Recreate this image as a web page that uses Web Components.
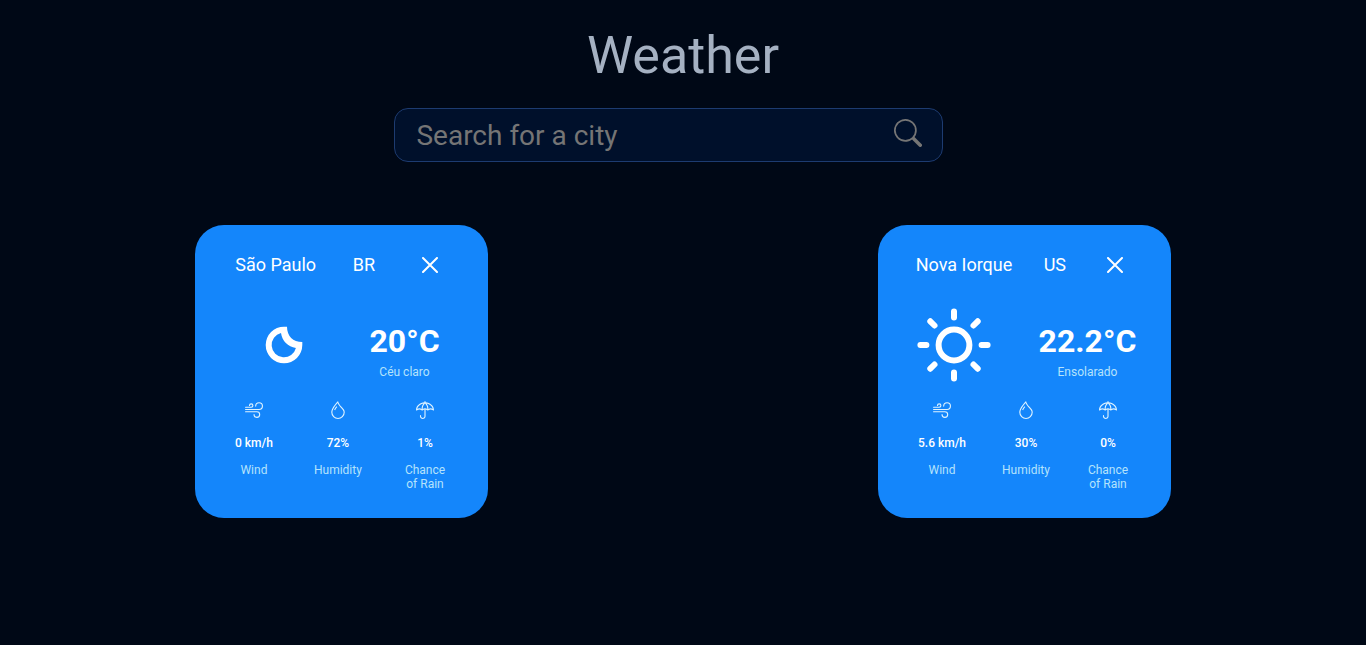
<!DOCTYPE html>
<html lang="en">
<head>
<meta charset="utf-8">
<meta name="viewport" content="width=device-width, initial-scale=1">
<title>Weather</title>
<style>
  body { margin: 0; min-height: 100vh; background: #000816; color: #fff; font-family: Roboto, sans-serif; }
</style>
</head>
<body>
<weather-app>
  <city-search slot="search"></city-search>
  <weather-card city="São Paulo" country="BR" sky="moon" temp="20" wind="0" humidity="72" rain="1">Céu claro</weather-card>
  <weather-card city="Nova Iorque" country="US" sky="sun" temp="22.2" wind="5.6" humidity="30" rain="0">Ensolarado</weather-card>
</weather-app>

<template id="app-template">
  <style>
    :host { display: block; }
    header { display: flex; flex-direction: column; align-items: center; gap: 22px; padding-top: 26px; }
    h1 { margin: 0; font-size: 52px; line-height: 60px; font-weight: 400; color: #a5b1c2; }
    ::slotted(city-search) { width: 100%; }
    main { display: grid; grid-template-columns: repeat(auto-fit, minmax(300px, 1fr)); justify-items: center; gap: 24px 0; padding: 63px 0 48px; }
  </style>
  <header><h1>Weather</h1><slot name="search"></slot></header>
  <main><slot></slot></main>
</template>

<template id="search-template">
  <style>
    :host { display: block; }
    form { display: flex; justify-content: center; padding-right: 29px; }
    .field { position: relative; width: 41%; min-width: 280px; }
    input { box-sizing: border-box; width: 100%; height: 54px; padding: 0 64px 0 21px; border: 1px solid #1d3b70; border-radius: 14px;
      background: #00102b; color: #a5b1c2; font: 400 28px/34px Roboto, sans-serif; outline: none; }
    input::placeholder { color: #757575; opacity: 1; }
    button { position: absolute; top: 11px; right: 21px; padding: 0; border: 0; background: none; color: #757575; cursor: pointer; }
    svg { display: block; width: 28px; height: 28px; fill: currentColor; }
  </style>
  <form>
    <div class="field">
      <input type="text" name="city" placeholder="Search for a city" aria-label="Search for a city">
      <button type="submit" aria-label="Search">
        <svg viewBox="0 0 16 16" aria-hidden="true"><path d="M11.742 10.344a6.5 6.5 0 1 0-1.397 1.398h-.001c.03.04.062.078.098.115l3.85 3.85a1 1 0 0 0 1.415-1.414l-3.85-3.85a1.007 1.007 0 0 0-.115-.1zM12 6.5a5.5 5.5 0 1 1-11 0 5.5 5.5 0 0 1 11 0z"/></svg>
      </button>
    </div>
  </form>
</template>

<template id="card-template">
  <style>
    :host { display: block; box-sizing: border-box; width: 293px; min-height: 293px; padding: 24px 22px; border-radius: 29px; background: #1486fb; }
    header { display: flex; align-items: center; justify-content: space-around; height: 32px; font-size: 18px; line-height: 22px; }
    h2 { margin: 0; font-size: 18px; line-height: 22px; font-weight: 400; }
    button { padding: 8px 10px; border: 0; background: none; color: inherit; cursor: pointer; }
    button svg { display: block; width: 16px; height: 16px; stroke: currentColor; stroke-width: 2; stroke-linecap: round; }
    .now { display: flex; align-items: center; justify-content: center; gap: 44px; height: 80px; margin-top: 24px; }
    .reading { padding-top: 10px; text-align: center; }
    .reading p { margin: 0; }
    .reading .temp { font-size: 32px; line-height: 40px; font-weight: 700; }
    .reading .desc { font-size: 12px; line-height: 14px; margin-top: 4px; color: #b5e3fb; }
    .stats { display: flex; justify-content: space-between; margin-top: 16px; padding: 0 19px 0 18px; }
  </style>
  <header>
    <h2 class="city"></h2><span class="country"></span>
    <button type="button" aria-label="Remove"><svg viewBox="0 0 16 16" aria-hidden="true"><path d="M1 1 15 15M15 1 1 15"/></svg></button>
  </header>
  <section class="now">
    <sky-icon></sky-icon>
    <div class="reading"><p class="temp"></p><p class="desc"><slot></slot></p></div>
  </section>
  <section class="stats">
    <weather-stat icon="wind" label="Wind"></weather-stat>
    <weather-stat icon="droplet" label="Humidity"></weather-stat>
    <weather-stat icon="umbrella" label="Chance of Rain"></weather-stat>
  </section>
</template>

<template id="stat-template">
  <style>
    :host { display: flex; flex-direction: column; align-items: center; max-width: 48px; text-align: center; font-size: 12px; line-height: 14px; }
    :host([icon="umbrella"]) { width: 44px; }
    svg { display: block; width: 18px; height: 18px; fill: #dff3ff; }
    .value { margin-top: 17px; font-weight: 500; white-space: nowrap; }
    .label { margin-top: 13px; color: #b5e3fb; }
  </style>
  <svg viewBox="0 0 16 16" aria-hidden="true"><path/></svg>
  <span class="value"><slot></slot></span>
  <span class="label"></span>
</template>

<script>
const STAT_ICONS = {
  wind: "M12.5 2A2.5 2.5 0 0 0 10 4.5a.5.5 0 0 1-1 0A3.5 3.5 0 1 1 12.5 8H.5a.5.5 0 0 1 0-1h12a2.5 2.5 0 0 0 0-5zm-7 1a1 1 0 0 0-1 1 .5.5 0 0 1-1 0 2 2 0 1 1 2 2h-5a.5.5 0 0 1 0-1h5a1 1 0 0 0 0-2zM0 9.5A.5.5 0 0 1 .5 9h10.042a3 3 0 1 1-3 3 .5.5 0 0 1 1 0 2 2 0 1 0 2-2H.5a.5.5 0 0 1-.5-.5z",
  droplet: "M7.21.8C7.69.295 8 0 8 0c.109.363.234.708.371 1.038.812 1.946 2.073 3.35 3.197 4.6C12.878 7.096 14 8.345 14 10a6 6 0 0 1-12 0C2 6.668 5.58 2.517 7.21.8zm.413 1.021A31.25 31.25 0 0 0 5.794 3.99c-.726.95-1.436 2.008-1.96 3.07C3.304 8.133 3 9.138 3 10a5 5 0 0 0 10 0c0-1.201-.796-2.157-2.181-3.7l-.03-.032C9.75 5.11 8.5 3.72 7.623 1.82zM4.553 7.776c.82-1.641 1.717-2.753 2.093-3.13l.708.708c-.29.29-1.128 1.311-1.907 2.87z",
  umbrella: "M8 0a.5.5 0 0 1 .5.5v.514C12.625 1.238 16 4.22 16 8c0 0 0 .5-.5.5-.149 0-.352-.145-.352-.145l-.004-.004-.025-.023a3.484 3.484 0 0 0-.555-.394A3.166 3.166 0 0 0 13 7.5c-.638 0-1.178.213-1.564.434a3.484 3.484 0 0 0-.555.394l-.025.023-.003.003s-.204.146-.353.146-.352-.145-.352-.145l-.004-.004-.025-.023a3.484 3.484 0 0 0-.555-.394 3.3 3.3 0 0 0-1.064-.39V13.5H8h.5v.039l-.005.083a2.958 2.958 0 0 1-.298 1.102 2.257 2.257 0 0 1-.763.88C7.06 15.851 6.587 16 6 16s-1.061-.148-1.434-.396a2.255 2.255 0 0 1-.763-.88 2.958 2.958 0 0 1-.302-1.185v-.025l-.001-.009v-.003s0-.002.5-.002h-.5V13a.5.5 0 0 1 1 0v.506l.003.044a1.958 1.958 0 0 0 .195.726c.095.191.23.367.423.495.19.127.466.229.879.229s.689-.102.879-.229c.193-.128.328-.304.424-.495a1.958 1.958 0 0 0 .197-.77V7.544a3.166 3.166 0 0 0-1.064.39 3.482 3.482 0 0 0-.58.417l-.004.004S5.65 8.5 5.5 8.5c-.149 0-.352-.145-.352-.145l-.004-.004a3.482 3.482 0 0 0-.58-.417A3.166 3.166 0 0 0 3 7.5c-.638 0-1.177.213-1.564.434a3.482 3.482 0 0 0-.58.417l-.004.004S.65 8.5.5 8.5C0 8.5 0 8 0 8c0-3.78 3.375-6.762 7.5-6.986V.5A.5.5 0 0 1 8 0zM6.577 2.123c-2.833.5-4.99 2.458-5.474 4.854A4.124 4.124 0 0 1 3 6.5c.806 0 1.48.25 1.962.511a9.706 9.706 0 0 1 .344-2.358c.242-.868.64-1.765 1.271-2.53zm-.615 4.93A4.16 4.16 0 0 1 8 6.5a4.16 4.16 0 0 1 2.038.553 8.688 8.688 0 0 0-.307-2.13C9.434 3.858 8.898 2.83 8 2.117c-.898.712-1.434 1.74-1.731 2.804a8.687 8.687 0 0 0-.307 2.131zm3.46-4.93c.631.765 1.03 1.662 1.272 2.53.233.833.328 1.66.344 2.358A4.14 4.14 0 0 1 13 6.5c.77 0 1.42.23 1.897.477-.484-2.396-2.641-4.355-5.474-4.854z"
};

const SKY_ICONS = {
  sun: `<g fill="none" stroke="#fff" stroke-width="6" stroke-linecap="round">
    <circle cx="40" cy="40" r="15.4"/>
    <path d="M40 6.4v6M40 67.6v6M6.4 40h6M67.6 40h6M16.3 16.3l4.2 4.2M59.5 59.5l4.2 4.2M16.3 63.7l4.2-4.2M59.5 20.5l4.2-4.2"/></g>`,
  moon: `<path fill="#fff" fill-rule="evenodd" d="M43 21.7C43 31 49 37 58.3 37V40A18.3 18.3 0 1 1 40 21.7ZM37 28.1A12.3 12.3 0 1 0 51.9 43C44 42 38 36 37 28.1Z"/>`
};

class TemplateElement extends HTMLElement {
  constructor() {
    super();
    const template = document.getElementById(this.constructor.template);
    this.attachShadow({ mode: "open" }).append(template.content.cloneNode(true));
  }
}

class WeatherApp extends TemplateElement { static template = "app-template"; }

class CitySearch extends TemplateElement {
  static template = "search-template";
  connectedCallback() {
    this.shadowRoot.querySelector("form").addEventListener("submit", e => e.preventDefault());
  }
}

class SkyIcon extends HTMLElement {
  static observedAttributes = ["name"];
  constructor() { super(); this.attachShadow({ mode: "open" }); }
  attributeChangedCallback() {
    this.shadowRoot.innerHTML = `<style>:host { display: block; flex: none; width: 82px; } svg { display: block; }</style>
      <svg width="82" height="82" viewBox="-1 -1 82 82" aria-hidden="true">${SKY_ICONS[this.getAttribute("name")]}</svg>`;
  }
}

class WeatherStat extends TemplateElement {
  static template = "stat-template";
  connectedCallback() {
    this.shadowRoot.querySelector("path").setAttribute("d", STAT_ICONS[this.getAttribute("icon")]);
    this.shadowRoot.querySelector(".label").textContent = this.getAttribute("label");
  }
}

class WeatherCard extends TemplateElement {
  static template = "card-template";
  connectedCallback() {
    const find = s => this.shadowRoot.querySelector(s);
    const attr = n => this.getAttribute(n);
    find(".city").textContent = attr("city");
    find(".country").textContent = attr("country");
    find("sky-icon").setAttribute("name", attr("sky"));
    find(".temp").textContent = `${attr("temp")}°C`;
    find('[icon="wind"]').textContent = `${attr("wind")} km/h`;
    find('[icon="droplet"]').textContent = `${attr("humidity")}%`;
    find('[icon="umbrella"]').textContent = `${attr("rain")}%`;
    find("button").addEventListener("click", () => this.remove());
  }
}

customElements.define("sky-icon", SkyIcon);
customElements.define("weather-stat", WeatherStat);
customElements.define("weather-card", WeatherCard);
customElements.define("city-search", CitySearch);
customElements.define("weather-app", WeatherApp);
</script>
</body>
</html>
